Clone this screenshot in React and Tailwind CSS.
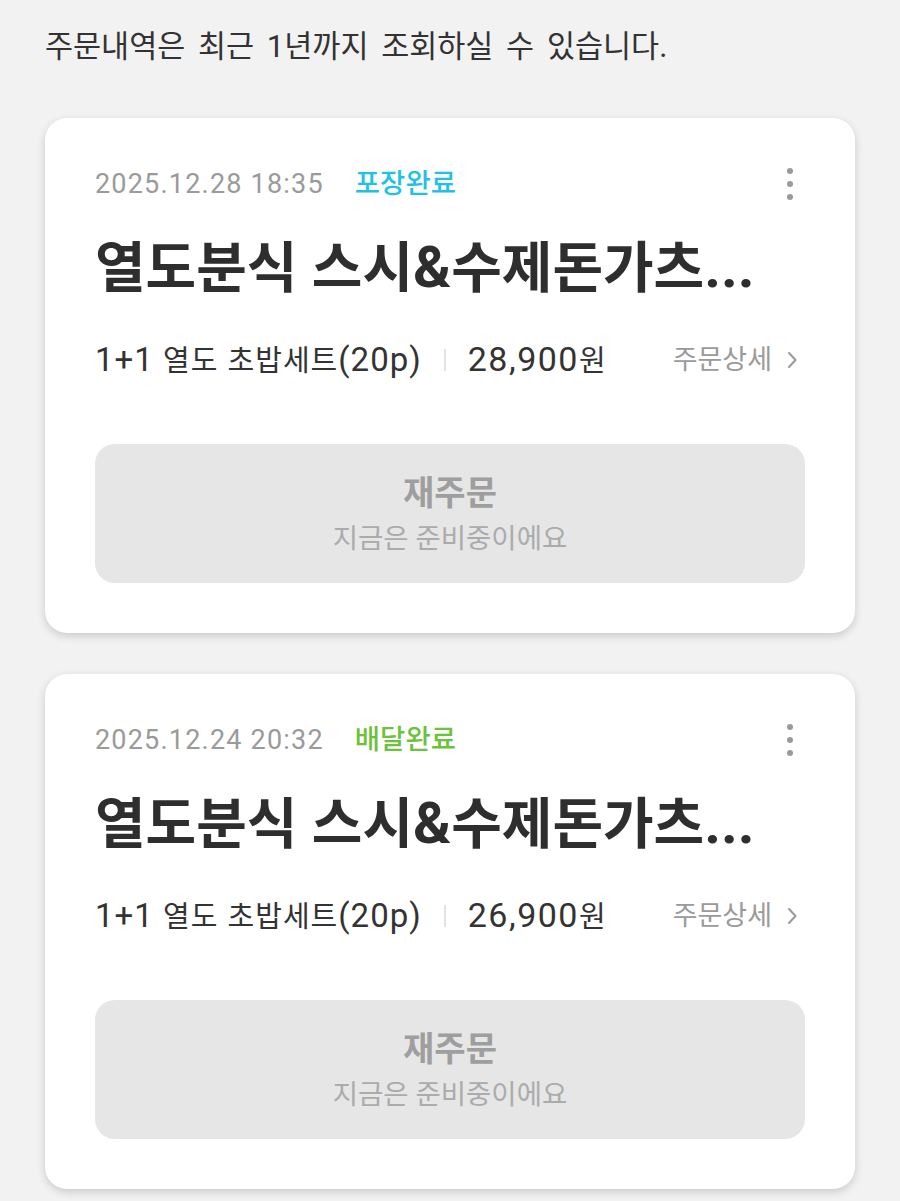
import React from "react";

const HANGUL = /([\uAC00-\uD7A3]+)/;

function Mixed({ text, hc }) {
  const parts = text.split(HANGUL);
  return parts.map((p, i) =>
    /[\uAC00-\uD7A3]/.test(p) ? (
      <span key={i} className={hc}>
        {p}
      </span>
    ) : (
      <React.Fragment key={i}>{p}</React.Fragment>
    )
  );
}

const orders = [
  { date: "2025.12.28 18:35", status: "포장완료", statusColor: "text-[#1fc2e4]", price: "28,900원" },
  { date: "2025.12.24 20:32", status: "배달완료", statusColor: "text-[#6cc23a]", price: "26,900원" },
];

function Dots() {
  return (
    <svg width="10" height="34" viewBox="0 0 10 34" className="block">
      <circle cx="5" cy="4" r="3" fill="#9a9a9a" />
      <circle cx="5" cy="17" r="3" fill="#9a9a9a" />
      <circle cx="5" cy="30" r="3" fill="#9a9a9a" />
    </svg>
  );
}

function Chevron() {
  return (
    <svg width="12" height="20" viewBox="0 0 12 20" className="block">
      <path d="M3 3 L9.5 10 L3 17" fill="none" stroke="#9a9a9a" strokeWidth="2" strokeLinecap="round" strokeLinejoin="round" />
    </svg>
  );
}

function Card({ o }) {
  return (
    <div className="bg-white rounded-[22px] shadow-[0_3px_9px_rgba(0,0,0,0.17)] pt-[49px] pb-[50px] px-[50px]">
      <div className="flex items-center h-[34px]">
        <span className="text-[27px] tracking-[1.2px] text-[#9a9a9a] leading-[34px] whitespace-pre">{o.date}</span>
        <span className={`ml-[31px] text-[27.5px] leading-[34px] font-medium ${o.statusColor}`}>{o.status}</span>
        <div className="ml-auto mr-[10px]">
          <Dots />
        </div>
      </div>
      <div className="mt-[36px] h-[60px] flex items-center text-[58px] leading-[60px] font-bold text-[#2e2e2e] whitespace-nowrap">
        <div>
          <Mixed text="열도분식 스시&수제돈가츠..." hc="text-[55px]" />
        </div>
      </div>
      <div className="mt-[45px] flex items-center h-[36px]">
        <span className="text-[33px] leading-[36px] tracking-[1px] text-[#333] whitespace-nowrap">
          <Mixed text="1+1 열도 초밥세트(20p)" hc="text-[29px]" />
        </span>
        <span className="mx-[22px] w-[2px] h-[22px] bg-[#e2e2e2]"></span>
        <span className="text-[34px] leading-[36px] tracking-[1.5px] text-[#333] whitespace-nowrap">
          <Mixed text={o.price} hc="text-[29px]" />
        </span>
        <span className="ml-auto mr-[7px] flex items-center gap-[14px] text-[27px] leading-[36px] text-[#9a9a9a]">
          주문상세
          <Chevron />
        </span>
      </div>
      <div className="mt-[66px] h-[139px] rounded-[20px] bg-[#e6e6e6] flex flex-col items-center justify-center">
        <div className="text-[34px] leading-[40px] font-bold text-[#9e9e9e]">재주문</div>
        <div className="mt-[10px] text-[27.5px] leading-[32px] text-[#ababab]">지금은 준비중이에요</div>
      </div>
    </div>
  );
}

export default function App() {
  return (
    <div
      className="min-h-[1201px] bg-[#f2f2f2] px-[45px] pt-[27px]"
      style={{ fontFamily: 'Roboto, "Noto Sans CJK KR", "Noto Sans", sans-serif' }}
    >
      <div className="h-[40px] flex items-center text-[31px] leading-[40px] text-[#333] [word-spacing:5px] whitespace-nowrap">
        <div>
          <Mixed text="주문내역은 최근 1년까지 조회하실 수 있습니다." hc="text-[30.5px]" />
        </div>
      </div>
      <div className="mt-[51px] flex flex-col gap-[41px]">
        {orders.map((o, i) => (
          <Card key={i} o={o} />
        ))}
      </div>
    </div>
  );
}
